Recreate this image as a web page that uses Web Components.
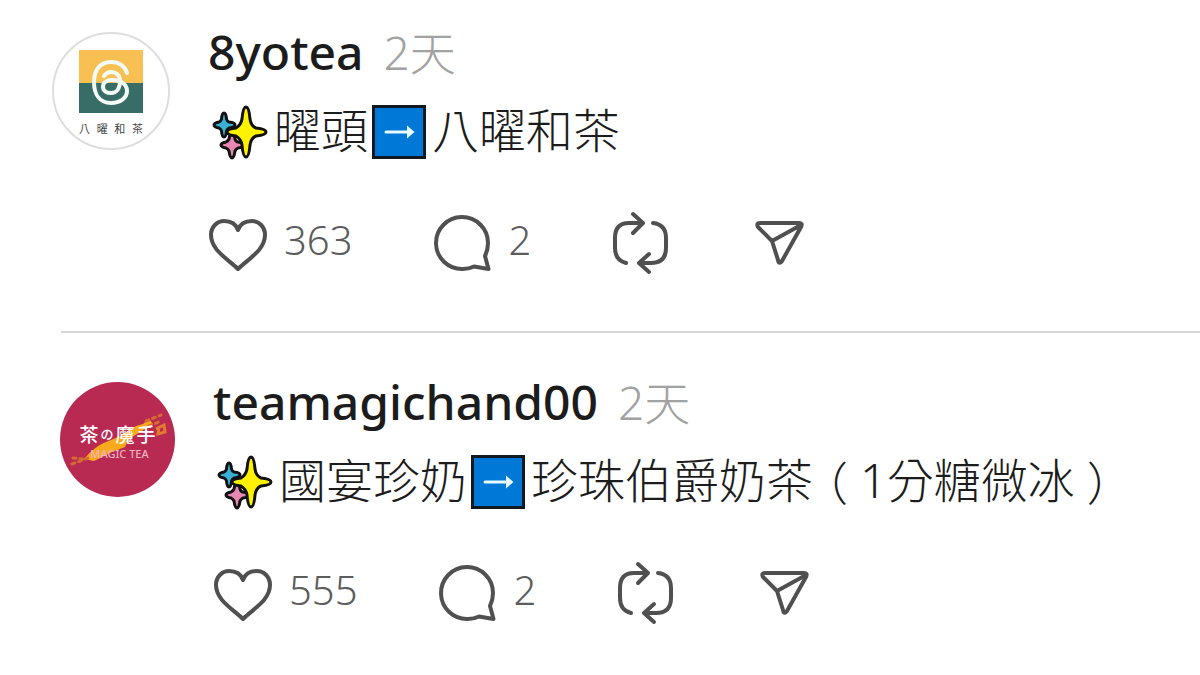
<!DOCTYPE html>
<html lang="zh-Hant">
<head>
<meta charset="utf-8">
<meta name="viewport" content="width=device-width, initial-scale=1">
<title>Tea thread</title>
<style>
  body { margin: 0; background: #fff; font-family: "Noto Sans", "Noto Sans CJK TC", sans-serif; color: #1c1c1c; }
</style>
</head>
<body>
<thread-feed>
  <thread-post likes="363" replies="2">
    <yotea-avatar slot="avatar"></yotea-avatar>
    <a slot="name" href="#8yotea">8yotea</a>
    <time slot="time">2天</time>
    <emoji-sparkles></emoji-sparkles><span>曜頭</span><emoji-arrow></emoji-arrow><span>八曜和茶</span>
  </thread-post>
  <post-divider></post-divider>
  <thread-post class="next" likes="555" replies="2">
    <magic-avatar slot="avatar"></magic-avatar>
    <a slot="name" href="#teamagichand00">teamagichand00</a>
    <time slot="time">2天</time>
    <emoji-sparkles></emoji-sparkles><span>國宴珍奶</span><emoji-arrow></emoji-arrow><span>珍珠伯爵奶茶</span><span class="paren">（</span><span>1分糖微冰</span><span class="paren">）</span>
  </thread-post>
</thread-feed>

<script>
const define = (name, html, setup) => customElements.define(name, class extends HTMLElement {
  constructor() {
    super();
    const t = document.createElement('template');
    t.innerHTML = html;
    this.attachShadow({ mode: 'open' }).append(t.content.cloneNode(true));
  }
  connectedCallback() { if (setup) setup(this, this.shadowRoot); }
});

define('thread-feed', `
<style>
  :host { display: block; }
  ::slotted(thread-post) { padding: 20px 0 58px 52px; }
  ::slotted(thread-post.next) { padding: 37px 0 48px 60px; }
</style>
<slot></slot>`);

define('post-divider', `<style>:host { display: block; height: 2px; margin-left: 61px; background: #d6d6d6; }</style>`);

define('emoji-sparkles', `
<style>:host { display: block; flex: none; width: 56px; height: 56px; margin: 0 6px 0 4px; } svg { display: block; }</style>
<svg width="56" height="56" viewBox="0 0 56 56" role="img" aria-label="sparkles" stroke="#111" stroke-width="3" stroke-linejoin="round">
  <path fill="#3ab0d3" d="M12 9Q14 9 14.500 15Q15 17 17 18Q23 18.500 23 21Q23 23 17 24Q15 25 14.500 27Q14 33 12 33Q10 33 9.500 27Q9 25 7 24Q2 23 2 21Q2 19 7 18Q9 17 9.500 15Q10 9 12 9Z"/>
  <path fill="#e887b2" d="M20 29Q22 29 23 35Q24 38 26 38Q32 39 32 41Q32 43 26 44Q24 45 23 47Q22 54 20 54Q18 54 17 47Q16 45 14 44Q9 43 9 41Q9 39 14 38Q16 37 17 35Q18 29 20 29Z"/>
  <path fill="#fff200" d="M34 3Q37 3 38 15Q39 22 44 24Q54 25 54 28Q54 31 44 32Q39 34 38 41Q37 53 34 53Q31 53 30 41Q29 35 24 32Q15 31 15 28Q15 25 24 24Q29 21 30 15Q31 3 34 3Z"/>
</svg>`);

define('emoji-arrow', `
<style>:host { display: block; flex: none; width: 54px; height: 54px; margin: 0 6px 0 4px; } svg { display: block; }</style>
<svg width="54" height="54" viewBox="0 0 54 54" role="img" aria-label="right arrow">
  <rect x="1.500" y="1.500" width="51" height="51" fill="#0078d7" stroke="#101820" stroke-width="3"/>
  <path d="M14 27H37" stroke="#e8fbff" stroke-width="3" stroke-linecap="round"/>
  <path d="M35 20.500L42.500 27L35 33.500Z" fill="#e8fbff"/>
</svg>`);

define('yotea-avatar', `
<style>
  :host { display: flex; flex-direction: column; align-items: center; box-sizing: border-box; width: 118px; height: 118px; padding-top: 16px; border: 2px solid #dedede; border-radius: 50%; background: #fff; }
  svg { display: block; }
  div { display: flex; justify-content: space-between; width: 64px; margin-top: 7px; font: 400 11px/16px "Noto Sans CJK TC", sans-serif; color: #444; }
</style>
<svg width="64" height="63" viewBox="0 0 64 63" aria-hidden="true">
  <path fill="#f8c052" d="M0 0h64v33H0z"/><path fill="#376c67" d="M0 33h64v30H0z"/>
  <path fill="none" stroke="#f2fbf5" stroke-width="4" stroke-linecap="round" d="M48 23C46 16 40 12 32 12C21 12 15 20 15 32C15 45 21 53 32 53C41 53 48 48 48 41C48 33 40 30 33 30C27 30 24 33 24 37C24 41 28 43 32 43C38 43 41 38 41 31C41 25 37 22 32 22C29 22 27 23 25 26"/>
</svg>
<div><span>八</span><span>曜</span><span>和</span><span>茶</span></div>`);

define('magic-avatar', `
<style>
  :host { display: grid; place-items: center; width: 115px; height: 115px; border-radius: 50%; background: #b92a53; color: #fff; overflow: hidden; }
  svg, div { grid-area: 1 / 1; }
  svg { display: block; }
  div { position: relative; text-align: center; }
  b, small { display: block; }
  b { display: flex; justify-content: center; gap: 2px; margin-top: 4px; font: 500 19px/24px "Noto Sans CJK TC", sans-serif; }
  b i { font-style: normal; font-size: 13px; }
  small { font: 500 11px/16px "Noto Sans", sans-serif; color: #efb3c0; padding-left: 4px; }
</style>
<svg width="115" height="115" viewBox="0 0 115 115" aria-hidden="true">
  <path fill="#f9a91c" d="M24 77Q35 64 46 60L63 53Q72 44 83 42L89 37L93 42L80 50L68 58L65 65L52 70L34 79Z"/>
  <path fill="none" stroke="#d56a32" stroke-width="3" stroke-linecap="round" stroke-dasharray="3 4" d="M12 82L28 76M13 76L24 77M86 39L101 33M89 44L101 39"/>
  <path fill="none" stroke="#e37a30" stroke-width="3" d="M96 47L104 43L105 50L98 52L99 44"/>
</svg>
<div><b><span>茶</span><i>の</i><span>魔</span><span>手</span></b><small>MAGIC TEA</small></div>`);

define('thread-post', `
<style>
  :host { display: flex; align-items: flex-start; gap: 38px; }
  .avatar { flex: none; padding-top: 12px; }
  .main { flex: 1; min-width: 0; }
  header { display: flex; align-items: baseline; gap: 20px; height: 64px; line-height: 64px; white-space: nowrap; }
  ::slotted(a) { color: #1c1c1c; text-decoration: none; font-size: 48px; font-weight: 500; }
  ::slotted(time) { color: #a2a2a2; font-size: 46px; font-weight: 300; }
  .body { display: flex; align-items: center; height: 64px; margin-top: 16px; font-size: 47px; font-weight: 300; line-height: 64px; white-space: nowrap; }
  ::slotted(span) { margin-top: -4px; }
  ::slotted(span.paren) { margin-left: 12px; margin-right: 12px; font-family: "Noto Sans CJK TC", sans-serif; font-size: 46px; font-feature-settings: "halt"; }
  .actions { display: flex; align-items: center; gap: 80px; height: 60px; margin-top: 49px; }
  button { display: flex; align-items: center; gap: 16px; height: 60px; padding: 0; border: 0; background: none; color: #5c5c5c; font: 300 40px/60px "Noto Sans", sans-serif; }
  button span { margin-top: -6px; }
  button.send { margin-left: 6px; }
  svg { display: block; overflow: visible; fill: none; stroke: #505050; stroke-width: 4; stroke-linecap: round; stroke-linejoin: round; }
</style>
<div class="avatar"><slot name="avatar"></slot></div>
<div class="main">
  <header><slot name="name"></slot><slot name="time"></slot></header>
  <div class="body"><slot></slot></div>
  <div class="actions">
    <button type="button" aria-label="Like"><svg width="60" height="60" viewBox="0 0 60 60"><path d="M30 56C24 50 16 45 9 37C5 32 3 28 3 22C3 14 9 8 16 8C23 8 28 11 30 17C32 11 37 8 44 8C51 8 57 14 57 22C57 28 55 32 51 37C44 45 36 50 30 56Z"/></svg><span class="likes"></span></button>
    <button type="button" aria-label="Reply"><svg width="60" height="60" viewBox="0 0 60 60"><path d="M52 43L55.500 56L41 53.500C38 55 34 56 30 56A26 26 0 1 1 55 30C55 35 54 39 52 43Z"/></svg><span class="replies"></span></button>
    <button type="button" aria-label="Repost"><svg width="58" height="60" viewBox="0 0 58 60"><path d="M15 50C7 48 4 43 4 35V25C4 15 9 10 18 10H31M22 1L32 10L22 20M42 10C51 11 55 16 55 25V35C55 45 50 50 40 50H28M38 41L28 50L38 59"/></svg></button>
    <button type="button" class="send" aria-label="Share"><svg width="50" height="60" viewBox="0 0 50 60"><path d="M5 10H44Q48 10 46 14L27 48Q24 52 23 47L17 28L3 14Q1 10 5 10ZM17 28L46 12"/></svg></button>
  </div>
</div>`, (host, root) => {
  root.querySelector('.likes').textContent = host.getAttribute('likes');
  root.querySelector('.replies').textContent = host.getAttribute('replies');
});
</script>
</body>
</html>
